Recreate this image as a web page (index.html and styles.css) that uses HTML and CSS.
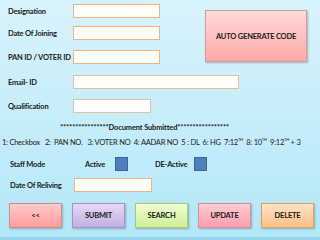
FILE: index.html
```html
<!DOCTYPE html>
<html lang="en">
<head>
    <meta charset="UTF-8">
    <title>Staff Details</title>
    <link rel="stylesheet" href="styles.css">
</head>
<body>
    <div class="page">
        <div class="top">
            <div class="fields">
                <div class="row r1">
                    <span class="label">Designation</span>
                    <div class="box orange"></div>
                </div>
                <div class="row r2">
                    <span class="label">Date Of Joining</span>
                    <div class="box orange"></div>
                </div>
                <div class="row r3">
                    <span class="label">PAN ID / VOTER ID</span>
                    <div class="box orange"></div>
                </div>
            </div>
            <div class="auto-btn">AUTO GENERATE CODE</div>
        </div>
        <div class="row r4">
            <span class="label">Email- ID</span>
            <div class="box tan wide"></div>
        </div>
        <div class="row r5">
            <span class="label">Qualification</span>
            <div class="box tan short"></div>
        </div>
        <p class="doc-title">****************Document Submitted*****************</p>
        <p class="doc-list">1: Checkbox &nbsp; 2: &nbsp;PAN NO. &nbsp; 3: VOTER NO &nbsp;4: AADAR NO &nbsp;5 : DL &nbsp;6: HG &nbsp;7:12<sup>TH</sup> &nbsp;8: 10<sup>TH</sup> &nbsp;9:12<sup>TH</sup> + 3</p>
        <div class="mode-row">
            <span class="label">Staff Mode</span>
            <span class="mode">Active</span>
            <span class="check"></span>
            <span class="mode de">DE-Active</span>
            <span class="check"></span>
        </div>
        <div class="row r6">
            <span class="label">Date Of Reliving</span>
            <div class="box orange short"></div>
        </div>
        <div class="buttons">
            <div class="btn back">&lt;&lt;</div>
            <div class="btn submit">SUBMIT</div>
            <div class="btn search">SEARCH</div>
            <div class="btn update">UPDATE</div>
            <div class="btn delete">DELETE</div>
        </div>
    </div>
</body>
</html>
```

FILE: styles.css
```css
body {
    margin: 0;
    font-family: Lato, "Open Sans", sans-serif;
    color: #1a1a1a;
}
.page {
    width: 320px;
    height: 240px;
    box-sizing: border-box;
    padding: 4px 0 0 8px;
    background: linear-gradient(#d9f3fc, #b2e8f8);
    border-bottom: 3px solid #93d6ec;
    overflow: hidden;
}
.top {
    display: flex;
}
.row {
    display: flex;
    align-items: center;
}
.label {
    width: 65px;
    font-size: 7.5px;
    font-weight: bold;
    letter-spacing: -0.2px;
    white-space: nowrap;
}
.box {
    height: 14px;
    width: 87px;
    box-sizing: border-box;
    background: #fffdf9;
}
.box.orange {
    border: 1.5px solid #efb482;
}
.box.tan {
    border: 1.5px solid #dcc2a2;
}
.box.wide {
    width: 166px;
}
.box.short {
    width: 78px;
}
.r2 { margin-top: 8px; }
.r3 { margin-top: 10px; }
.r4 { margin-top: 11px; }
.r5 { margin-top: 10px; }
.auto-btn {
    margin: 6px 0 0 45px;
    width: 102px;
    height: 52px;
    box-sizing: border-box;
    display: flex;
    align-items: center;
    justify-content: center;
    font-size: 7.5px;
    font-weight: bold;
    letter-spacing: -0.2px;
    background: linear-gradient(#ffd9d9, #ffa9a9);
    border: 1px solid #d79a9a;
    box-shadow: 1px 1px 2px rgba(0, 0, 0, 0.25);
}
.doc-title {
    margin: 10px 0 0 52px;
    font-size: 7.5px;
    font-weight: bold;
    line-height: 10px;
    letter-spacing: -0.15px;
}
.doc-list {
    margin: 2px 0 0 -6px;
    font-size: 7.5px;
    line-height: 10px;
    white-space: nowrap;
    letter-spacing: -0.25px;
}
.doc-list sup {
    font-size: 4px;
    vertical-align: 4px;
}
.mode-row {
    display: flex;
    align-items: center;
    margin-top: 9px;
    font-size: 7.5px;
    font-weight: bold;
    letter-spacing: -0.2px;
}
.mode-row .label {
    width: 75px;
    padding-left: 2px;
}
.mode {
    width: 30px;
}
.mode.de {
    width: 39px;
    margin-left: 27px;
}
.check {
    width: 11px;
    height: 12px;
    background: #4f7fbf;
    border: 1px solid #3a64a0;
}
.r6 {
    margin-top: 7px;
}
.r6 .label {
    width: 64px;
    padding-left: 2px;
}
.buttons {
    display: flex;
    gap: 10px;
    margin-top: 11px;
    margin-left: 1px;
}
.btn {
    width: 53px;
    height: 25px;
    box-sizing: border-box;
    display: flex;
    align-items: center;
    justify-content: center;
    font-size: 7.5px;
    font-weight: bold;
    letter-spacing: -0.2px;
    box-shadow: 1px 1px 2px rgba(0, 0, 0, 0.25);
}
.back {
    background: linear-gradient(#ffcaca, #ff9c9c);
    border: 1px solid #d08d8d;
}
.submit {
    background: linear-gradient(#e6d9f4, #c3aee3);
    border: 1px solid #a493c4;
}
.search {
    background: linear-gradient(#f0ffd6, #cdef94);
    border: 1px solid #a9c977;
}
.update {
    background: linear-gradient(#ffccd2, #ff9dab);
    border: 1px solid #d68f99;
}
.delete {
    background: linear-gradient(#ffe3c6, #ffbf84);
    border: 1px solid #d9a06b;
}
```
